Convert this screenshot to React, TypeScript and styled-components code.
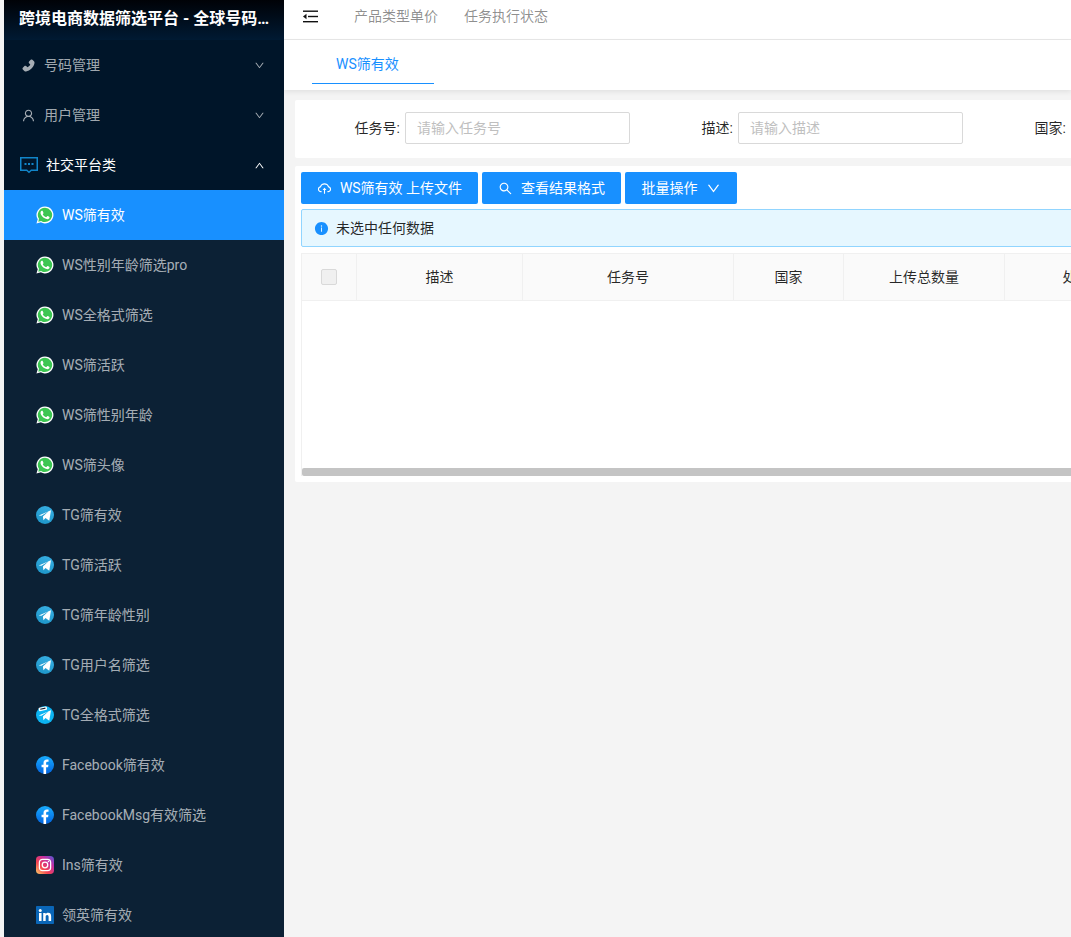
import styled, { createGlobalStyle } from "styled-components";
import {
  AiFillPhone,
  AiOutlineUser,
  AiOutlineDown,
  AiOutlineUp,
  AiOutlineCloudUpload,
  AiOutlineSearch,
  AiFillInfoCircle,
} from "react-icons/ai";

const GlobalStyle = createGlobalStyle`
  html, body {
    margin: 0;
    padding: 0;
    background: #f4f4f4;
    overflow: hidden;
  }
  * {
    box-sizing: border-box;
  }
  body {
    font-family: Roboto, "Noto Sans CJK SC", sans-serif;
    font-size: 14px;
  }
`;

const Page = styled.div`
  display: flex;
  height: 937px;
  width: 1071px;
  padding-left: 4px;
  overflow: hidden;
  background: #f4f4f4;
`;

const Sidebar = styled.aside`
  flex: 0 0 280px;
  background: #0c2135;
  overflow: hidden;
`;

const Logo = styled.div`
  height: 40px;
  padding: 0 10px 7px 15px;
  display: flex;
  align-items: center;
  background: linear-gradient(180deg, #000207 0%, #001a33 100%);
`;

const LogoText = styled.div`
  color: #fff;
  font-size: 16px;
  font-weight: 700;
  white-space: nowrap;
  overflow: hidden;
  text-overflow: ellipsis;
`;

const TopMenu = styled.div<{ $open?: boolean }>`
  height: 50px;
  display: flex;
  align-items: center;
  background: #001529;
  color: ${(p) => (p.$open ? "#fff" : "rgba(255,255,255,.65)")};
  padding: 0 19px 0 ${(p) => (p.$open ? "16px" : "17px")};
`;

const MenuIcon = styled.span<{ $open?: boolean }>`
  display: flex;
  width: ${(p) => (p.$open ? "26px" : "23px")};
  font-size: 15px;
`;

// the CJK glyphs sit a little low in the line box, this lifts them 1px
const Label = styled.span<{ $grow?: boolean }>`
  flex: ${(p) => (p.$grow ? 1 : "none")};
  padding-bottom: 2px;
`;

const Chevron = styled.span`
  display: flex;
  font-size: 11px;
`;

const SubItem = styled.div<{ $active?: boolean }>`
  height: 50px;
  display: flex;
  align-items: center;
  gap: 8px;
  padding-left: 32px;
  background: ${(p) => (p.$active ? "#1890ff" : "transparent")};
  color: ${(p) => (p.$active ? "#fff" : "rgba(255,255,255,.65)")};
  white-space: nowrap;
`;

const Main = styled.main`
  flex: 1;
  min-width: 0;
  overflow: hidden;
`;

const Header = styled.header`
  height: 40px;
  padding: 0 0 7px 19px;
  display: flex;
  align-items: center;
  background: #fff;
  border-bottom: 1px solid #e8e8e8;
`;

const Fold = styled.span`
  display: flex;
  width: 51px;
`;

const NavLink = styled.span`
  color: rgba(0, 0, 0, 0.45);
  margin-right: 26px;
  padding-bottom: 2px;
`;

const Tabs = styled.div`
  height: 50px;
  padding-left: 28px;
  background: #fff;
  box-shadow: 0 2px 5px rgba(0, 0, 0, 0.08);
`;

const Tab = styled.div`
  width: 122px;
  height: 44px;
  padding: 2px 0 0 24px;
  display: flex;
  align-items: center;
  color: #1890ff;
  border-bottom: 1px solid #1890ff;
`;

const Content = styled.div`
  width: 1300px;
  padding: 10px 0 0 11px;
  display: flex;
  flex-direction: column;
  gap: 8px;
`;

const SearchCard = styled.section`
  height: 58px;
  padding-top: 12px;
  display: flex;
  background: #fff;
  border-radius: 2px;
`;

const FormItem = styled.div`
  flex: 0 0 333px;
  min-width: 0;
  display: flex;
  align-items: flex-start;
  gap: 5px;
`;

const FormLabel = styled.label`
  flex: 0 0 105px;
  height: 32px;
  line-height: 32px;
  text-align: right;
  color: rgba(0, 0, 0, 0.85);
`;

const FormInput = styled.input`
  flex: 0 0 225px;
  width: 225px;
  height: 32px;
  padding: 0 11px;
  border: 1px solid #d9d9d9;
  border-radius: 2px;
  font: inherit;
  outline: none;
  &::placeholder {
    color: #bfbfbf;
  }
`;

const TableCard = styled.section`
  padding: 6px;
  height: 316px;
  background: #fff;
  border-radius: 2px;
`;

const Toolbar = styled.div`
  display: flex;
  gap: 4px;
`;

const Button = styled.button<{ $w: number }>`
  width: ${(p) => p.$w}px;
  height: 32px;
  padding: 0;
  display: flex;
  align-items: center;
  justify-content: center;
  border: 0;
  border-radius: 2px;
  background: #1890ff;
  color: #fff;
  font: inherit;
  white-space: nowrap;
`;

const ButtonIcon = styled.span<{ $before?: number; $after?: number }>`
  display: flex;
  margin-left: ${(p) => p.$before ?? 0}px;
  margin-right: ${(p) => p.$after ?? 0}px;
  font-size: 15px;
`;

const Alert = styled.div`
  margin-top: 5px;
  height: 38px;
  padding-left: 12px;
  display: flex;
  align-items: center;
  gap: 7px;
  background: #e6f7ff;
  border: 1px solid #91d5ff;
  border-radius: 2px;
  color: rgba(0, 0, 0, 0.85);
`;

const AlertIcon = styled.span`
  display: flex;
  color: #1890ff;
  font-size: 15px;
`;

const Table = styled.div`
  margin-top: 6px;
  height: 223px;
  display: flex;
  flex-direction: column;
  border: 1px solid #f0f0f0;
  border-bottom: 0;
`;

const HeadRow = styled.div`
  height: 47px;
  display: flex;
  background: #fafafa;
  border-bottom: 1px solid #f0f0f0;
`;

const HeadCell = styled.div<{ $w: number }>`
  flex: 0 0 ${(p) => p.$w}px;
  display: flex;
  align-items: center;
  justify-content: center;
  border-right: 1px solid #f0f0f0;
  color: rgba(0, 0, 0, 0.85);
`;

const CheckBox = styled.span`
  width: 16px;
  height: 16px;
  background: #f0f0f0;
  border: 1px solid #d9d9d9;
  border-radius: 2px;
`;

const TableBody = styled.div`
  flex: 1;
`;

const ScrollBar = styled.div`
  height: 8px;
  background: #c4c4c4;
  border-radius: 2px;
`;

function FoldIcon() {
  return (
    <svg width="16" height="13" viewBox="0 0 16 13">
      <rect x="0" y="0.5" width="15" height="1.4" fill="#111" />
      <rect x="5" y="5.8" width="10" height="1.4" fill="#111" />
      <rect x="0" y="11" width="15" height="1.4" fill="#111" />
      <path d="M0 6.5 3.5 3.8v5.4z" fill="#111" />
    </svg>
  );
}

function WhatsApp() {
  return (
    <svg width="18" height="18" viewBox="0 0 24 24">
      <path d="M12 .6A11.3 11.3 0 0 0 2.3 17.7L.6 23.4l5.9-1.6A11.3 11.3 0 1 0 12 .6z" fill="#fff" />
      <path d="M12 2.4a9.5 9.5 0 0 0-8 14.7l-1 3.8 3.9-1A9.5 9.5 0 1 0 12 2.4z" fill="#3cc652" />
      <path
        d="M17.472 14.382c-.297-.149-1.758-.867-2.03-.967-.273-.099-.471-.148-.67.15-.197.297-.767.966-.94 1.164-.173.199-.347.223-.644.075-.297-.15-1.255-.463-2.39-1.475-.883-.788-1.48-1.761-1.653-2.059-.173-.297-.018-.458.13-.606.134-.133.298-.347.446-.52.149-.174.198-.298.298-.497.099-.198.05-.371-.025-.52-.075-.149-.669-1.612-.916-2.207-.242-.579-.487-.5-.669-.51-.173-.008-.371-.01-.57-.01-.198 0-.52.074-.792.372-.272.297-1.04 1.016-1.04 2.479 0 1.462 1.065 2.875 1.213 3.074.149.198 2.096 3.2 5.077 4.487.709.306 1.262.489 1.694.625.712.227 1.36.195 1.871.118.571-.085 1.758-.719 2.006-1.413.248-.694.248-1.289.173-1.413-.074-.124-.272-.198-.57-.347z"
        fill="#fff"
      />
    </svg>
  );
}

function Telegram({ full }: { full?: boolean }) {
  const id = full ? "tgFull" : "tg";
  return (
    <svg width="18" height="18" viewBox="0 0 24 24">
      <defs>
        <linearGradient id={id} x1="0.7" y1="0" x2="0.3" y2="1">
          <stop offset="0" stopColor={full ? "#0cb4f2" : "#37aee2"} />
          <stop offset="1" stopColor={full ? "#0cb4f2" : "#1e96c8"} />
        </linearGradient>
      </defs>
      <circle cx="12" cy="12" r="12" fill={`url(#${id})`} />
      <path d="M3.6 12.6 20 5.6l-2.3 14-5-3.6-2.8 3-.7-5 8-7.4-10 6.4z" fill="#fff" />
      {full && <rect x="3.5" y="1.5" width="11" height="4.5" rx="1" fill="#fff" transform="rotate(-12 9 3)" />}
      {full && <rect x="5.5" y="2.8" width="7" height="1.6" fill="#123" transform="rotate(-12 9 3)" />}
    </svg>
  );
}

function Facebook() {
  return (
    <svg width="18" height="18" viewBox="0 0 24 24">
      <defs>
        <linearGradient id="fb" x1="0" y1="0" x2="0" y2="1">
          <stop offset="0" stopColor="#18acfe" />
          <stop offset="1" stopColor="#0163e0" />
        </linearGradient>
      </defs>
      <circle cx="12" cy="12" r="12" fill="url(#fb)" />
      <path d="M10 24v-9H7.4v-3.4H10V9.2c0-3 1.7-4.6 4.4-4.6 1.2 0 2.3.2 2.3.2v2.9h-1.4c-1.4 0-1.8.9-1.8 1.7v2.2h3.1l-.5 3.4h-2.6v9z" fill="#fff" />
    </svg>
  );
}

function Instagram() {
  return (
    <svg width="18" height="18" viewBox="0 0 24 24">
      <defs>
        <linearGradient id="ig" x1="0" y1="1" x2="1" y2="0">
          <stop offset="0" stopColor="#fdd26a" />
          <stop offset="0.35" stopColor="#f5424f" />
          <stop offset="0.7" stopColor="#c22fa5" />
          <stop offset="1" stopColor="#4f5bd5" />
        </linearGradient>
      </defs>
      <rect width="24" height="24" rx="5" fill="url(#ig)" />
      <rect x="4.5" y="4.5" width="15" height="15" rx="4.2" fill="none" stroke="#fff" strokeWidth="1.7" />
      <circle cx="12" cy="12" r="3.7" fill="none" stroke="#fff" strokeWidth="1.7" />
      <circle cx="16.6" cy="7.4" r="1" fill="#fff" />
    </svg>
  );
}

function Linkedin() {
  return (
    <svg width="18" height="18" viewBox="0 0 24 24">
      <rect width="24" height="24" rx="1" fill="#0a66b7" />
      <rect x="4" y="9.3" width="3.4" height="10.7" fill="#fff" />
      <circle cx="5.7" cy="5.9" r="2" fill="#fff" />
      <path d="M9.6 9.3h3.2v1.5c.6-1 1.8-1.8 3.4-1.8 3.2 0 4 2 4 5V20h-3.4v-5.2c0-1.5-.3-2.8-1.9-2.8s-2 1.2-2 2.7V20H9.6z" fill="#fff" />
    </svg>
  );
}

function MessageBox() {
  return (
    <svg width="18" height="18" viewBox="0 0 18 18">
      <path d="M.75 1.75h16.5v12.5h-6l-2.25 2-2.25-2h-6z" fill="none" stroke="#1185c9" strokeWidth="1.5" />
      <rect x="4.5" y="7" width="2" height="2" fill="#1185c9" />
      <rect x="8" y="7" width="2" height="2" fill="#1185c9" />
      <rect x="11.5" y="7" width="2" height="2" fill="#1185c9" />
    </svg>
  );
}

const subItems = [
  { label: "WS筛有效", icon: <WhatsApp /> },
  { label: "WS性别年龄筛选pro", icon: <WhatsApp /> },
  { label: "WS全格式筛选", icon: <WhatsApp /> },
  { label: "WS筛活跃", icon: <WhatsApp /> },
  { label: "WS筛性别年龄", icon: <WhatsApp /> },
  { label: "WS筛头像", icon: <WhatsApp /> },
  { label: "TG筛有效", icon: <Telegram /> },
  { label: "TG筛活跃", icon: <Telegram /> },
  { label: "TG筛年龄性别", icon: <Telegram /> },
  { label: "TG用户名筛选", icon: <Telegram /> },
  { label: "TG全格式筛选", icon: <Telegram full /> },
  { label: "Facebook筛有效", icon: <Facebook /> },
  { label: "FacebookMsg有效筛选", icon: <Facebook /> },
  { label: "Ins筛有效", icon: <Instagram /> },
  { label: "领英筛有效", icon: <Linkedin /> },
];

const columns = [
  { title: "描述", width: 166 },
  { title: "任务号", width: 211 },
  { title: "国家", width: 110 },
  { title: "上传总数量", width: 161 },
  { title: "处理状态", width: 172 },
];

export default function App() {
  return (
    <>
      <GlobalStyle />
      <Page>
        <Sidebar>
          <Logo>
            <LogoText>跨境电商数据筛选平台 - 全球号码检测系统</LogoText>
          </Logo>
          <TopMenu>
            <MenuIcon>
              <AiFillPhone />
            </MenuIcon>
            <Label $grow>号码管理</Label>
            <Chevron>
              <AiOutlineDown />
            </Chevron>
          </TopMenu>
          <TopMenu>
            <MenuIcon>
              <AiOutlineUser />
            </MenuIcon>
            <Label $grow>用户管理</Label>
            <Chevron>
              <AiOutlineDown />
            </Chevron>
          </TopMenu>
          <TopMenu $open>
            <MenuIcon $open>
              <MessageBox />
            </MenuIcon>
            <Label $grow>社交平台类</Label>
            <Chevron>
              <AiOutlineUp />
            </Chevron>
          </TopMenu>
          {subItems.map((item, index) => (
            <SubItem key={item.label} $active={index === 0}>
              {item.icon}
              <Label>{item.label}</Label>
            </SubItem>
          ))}
        </Sidebar>
        <Main>
          <Header>
            <Fold>
              <FoldIcon />
            </Fold>
            <NavLink>产品类型单价</NavLink>
            <NavLink>任务执行状态</NavLink>
          </Header>
          <Tabs>
            <Tab>WS筛有效</Tab>
          </Tabs>
          <Content>
            <SearchCard>
              <FormItem>
                <FormLabel>任务号:</FormLabel>
                <FormInput placeholder="请输入任务号" />
              </FormItem>
              <FormItem>
                <FormLabel>描述:</FormLabel>
                <FormInput placeholder="请输入描述" />
              </FormItem>
              <FormItem>
                <FormLabel>国家:</FormLabel>
                <FormInput placeholder="请选择国家" />
              </FormItem>
            </SearchCard>
            <TableCard>
              <Toolbar>
                <Button $w={177}>
                  <ButtonIcon $after={8}>
                    <AiOutlineCloudUpload />
                  </ButtonIcon>
                  <Label>WS筛有效 上传文件</Label>
                </Button>
                <Button $w={139}>
                  <ButtonIcon $after={8}>
                    <AiOutlineSearch />
                  </ButtonIcon>
                  <Label>查看结果格式</Label>
                </Button>
                <Button $w={112}>
                  <Label>批量操作</Label>
                  <ButtonIcon $before={8}>
                    <AiOutlineDown />
                  </ButtonIcon>
                </Button>
              </Toolbar>
              <Alert>
                <AlertIcon>
                  <AiFillInfoCircle />
                </AlertIcon>
                <Label>未选中任何数据</Label>
              </Alert>
              <Table>
                <HeadRow>
                  <HeadCell $w={55}>
                    <CheckBox />
                  </HeadCell>
                  {columns.map((col) => (
                    <HeadCell key={col.title} $w={col.width}>
                      <Label>{col.title}</Label>
                    </HeadCell>
                  ))}
                </HeadRow>
                <TableBody />
                <ScrollBar />
              </Table>
            </TableCard>
          </Content>
        </Main>
      </Page>
    </>
  );
}
